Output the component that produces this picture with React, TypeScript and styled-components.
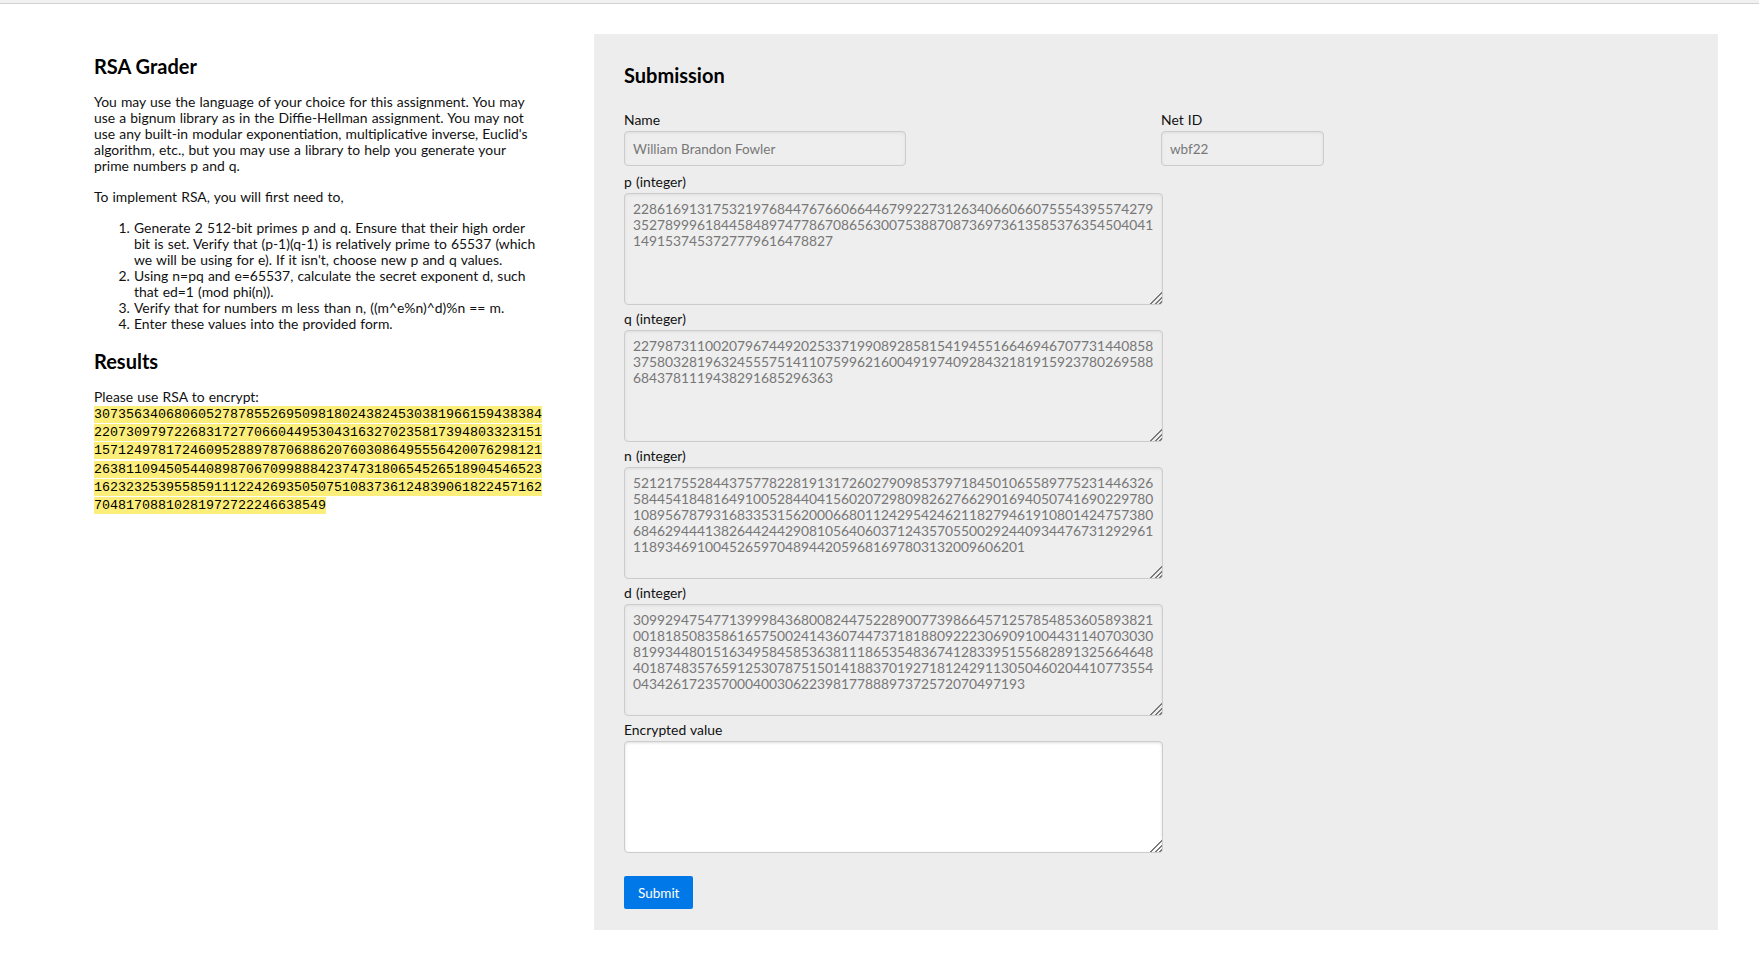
import React from 'react'
import styled, { createGlobalStyle } from 'styled-components'

const GlobalStyle = createGlobalStyle`
  html, body {
    margin: 0;
    padding: 0;
    background: #fff;
  }
  body {
    font-family: Lato, 'Open Sans', sans-serif;
    font-size: 13.9px;
    line-height: 16px;
    word-spacing: 0.6px;
    color: #111;
  }
`

const TopRule = styled.div`
  height: 3px;
  background: #f1f1f1;
  border-bottom: 1px solid #d2d2d2;
`

const Page = styled.div`
  display: grid;
  grid-template-columns: 450px 1fr;
  column-gap: 50px;
  align-items: start;
  padding: 30px 41px 30px 94px;
`

const Intro = styled.section`
  padding-top: 20px;
`

const Heading = styled.h2`
  margin: 0 0 16px;
  font-size: 20px;
  line-height: 24px;
  font-weight: 700;
  word-spacing: 0;
  color: #000;
`

const Para = styled.p`
  margin: 0 0 15px;
`

const Steps = styled.ol`
  margin: 0 0 17px;
  padding-left: 40px;
`

const Prompt = styled.div`
  margin: 0;
`

const Cipher = styled.mark`
  font-family: 'Liberation Mono', monospace;
  font-size: 13.33px;
  line-height: 16.2px;
  padding: 1px 0;
  background: #fcee7b;
  color: #000;
  word-break: break-all;
`

const Panel = styled.section`
  background: #ededed;
  padding: 29px 30px 21px;
`

const PanelTitle = styled.h2`
  margin: 0 0 25px;
  font-size: 20px;
  line-height: 24px;
  font-weight: 700;
  word-spacing: 0;
  color: #000;
`

const Row = styled.div`
  display: grid;
  grid-template-columns: 537px 1fr;
`

const Field = styled.div`
  display: flex;
  flex-direction: column;
  align-items: flex-start;
`

const Label = styled.label<{ $first?: boolean }>`
  display: block;
  margin: ${p => (p.$first ? '0' : '6px')} 0 3px;
  line-height: 16px;
  color: #111;
`

const Input = styled.input<{ $width: number }>`
  box-sizing: border-box;
  width: ${p => p.$width}px;
  height: 35px;
  padding: 0 8px;
  margin: 0 0 2px;
  font: inherit;
  font-size: 13.5px;
  color: #777;
  background: #eee;
  border: 1px solid #ccc;
  border-radius: 4px;
  box-shadow: inset 0 1px 3px #ddd;
  outline: none;
`

const Area = styled.textarea<{ $blank?: boolean }>`
  --fill: ${p => (p.$blank ? '#fff' : '#eee')};
  box-sizing: border-box;
  display: block;
  width: 539px;
  height: 112px;
  padding: 7px 8px;
  margin: 0;
  font-family: Lato, 'Open Sans', sans-serif;
  font-size: 13.8px;
  line-height: 16px;
  color: #777;
  background: var(--fill);
  border: 1px solid #ccc;
  border-radius: 4px;
  box-shadow: inset 0 1px 3px #ddd;
  outline: none;
  white-space: pre;
  overflow: hidden;

  &::-webkit-resizer {
    background:
      linear-gradient(135deg, var(--fill) 52%, transparent 52%),
      repeating-linear-gradient(135deg, transparent 0 2px, #7a7a7a 2px 3.4px);
  }
`

const Submit = styled.button`
  margin-top: 23px;
  height: 33px;
  padding: 0 14px;
  font: inherit;
  font-size: 13.5px;
  color: #fff;
  background: rgb(0, 120, 231);
  border: none;
  border-radius: 2px;
  cursor: pointer;
`

const cipher =
  '30735634068060527878552695098180243824530381966159438384' +
  '22073097972268317277066044953043163270235817394803323151' +
  '15712497817246095288978706886207603086495556420076298121' +
  '26381109450544089870670998884237473180654526518904546523' +
  '16232325395585911122426935050751083736124839061822457162' +
  '70481708810281972722246638549'

const values: { label: string; lines: string[] }[] = [
  {
    label: 'p (integer)',
    lines: [
      '22861691317532197684476766066446799227312634066066075554395574279',
      '35278999618445848974778670865630075388708736973613585376354504041',
      '1491537453727779616478827',
    ],
  },
  {
    label: 'q (integer)',
    lines: [
      '22798731100207967449202533719908928581541945516646946707731440858',
      '37580328196324555751411075996216004919740928432181915923780269588',
      '6843781119438291685296363',
    ],
  },
  {
    label: 'n (integer)',
    lines: [
      '52121755284437577822819131726027909853797184501065589775231446326',
      '58445418481649100528440415602072980982627662901694050741690229780',
      '10895678793168335315620006680112429542462118279461910801424757380',
      '68462944413826442442908105640603712435705500292440934476731292961',
      '1189346910045265970489442059681697803132009606201',
    ],
  },
  {
    label: 'd (integer)',
    lines: [
      '30992947547713999843680082447522890077398664571257854853605893821',
      '00181850835861657500241436074473718188092223069091004431140703030',
      '81993448015163495845853638111865354836741283395155682891325664648',
      '40187483576591253078751501418837019271812429113050460204410773554',
      '0434261723570004003062239817788897372572070497193',
    ],
  },
]

export default function App() {
  return (
    <>
      <GlobalStyle />
      <TopRule />
      <Page>
        <Intro>
          <Heading>RSA Grader</Heading>
          <Para>
            You may use the language of your choice for this assignment. You may use a bignum
            library as in the Diffie-Hellman assignment. You may not use any built-in modular
            exponentiation, multiplicative inverse, Euclid's algorithm, etc., but you may use a
            library to help you generate your prime numbers p and q.
          </Para>
          <Para>To implement RSA, you will first need to,</Para>
          <Steps>
            <li>
              Generate 2 512-bit primes p and q. Ensure that their high order bit is set. Verify
              that (p-1)(q-1) is relatively prime to 65537 (which we will be using for e). If it
              isn't, choose new p and q values.
            </li>
            <li>
              Using n=pq and e=65537, calculate the secret exponent d, such that ed=1 (mod phi(n)).
            </li>
            <li>Verify that for numbers m less than n, ((m^e%n)^d)%n == m.</li>
            <li>Enter these values into the provided form.</li>
          </Steps>
          <Heading>Results</Heading>
          <Prompt>
            Please use RSA to encrypt:
            <br />
            <Cipher>{cipher}</Cipher>
          </Prompt>
        </Intro>

        <Panel>
          <PanelTitle>Submission</PanelTitle>
          <form onSubmit={e => e.preventDefault()}>
            <Row>
              <Field>
                <Label $first>Name</Label>
                <Input $width={282} readOnly value="William Brandon Fowler" />
              </Field>
              <Field>
                <Label $first>Net ID</Label>
                <Input $width={163} readOnly value="wbf22" />
              </Field>
            </Row>
            {values.map(v => (
              <Field key={v.label}>
                <Label>{v.label}</Label>
                <Area readOnly value={v.lines.join('\n')} />
              </Field>
            ))}
            <Field>
              <Label>Encrypted value</Label>
              <Area $blank defaultValue="" />
            </Field>
            <Submit type="submit">Submit</Submit>
          </form>
        </Panel>
      </Page>
    </>
  )
}
